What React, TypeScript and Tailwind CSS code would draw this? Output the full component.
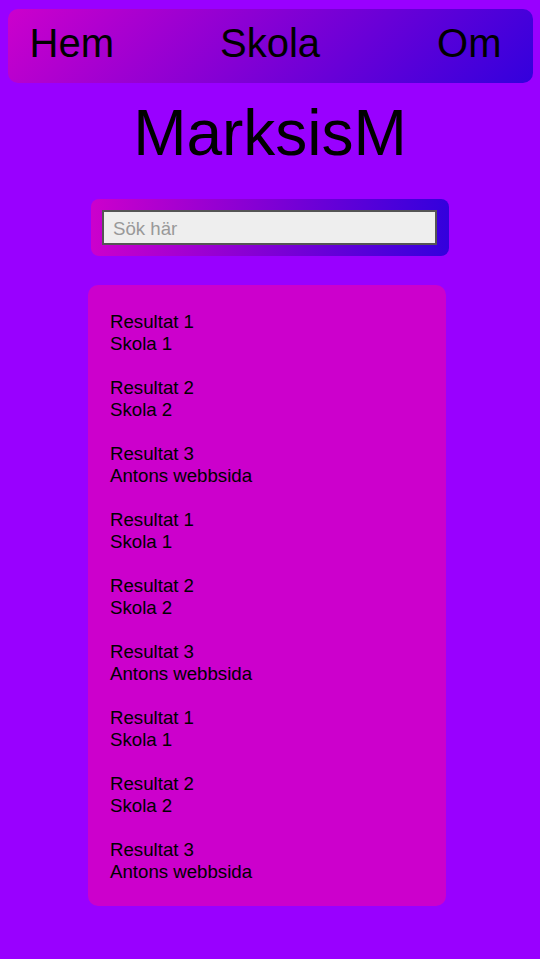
import React from "react";

const results = [
  ["Resultat 1", "Skola 1"],
  ["Resultat 2", "Skola 2"],
  ["Resultat 3", "Antons webbsida"],
  ["Resultat 1", "Skola 1"],
  ["Resultat 2", "Skola 2"],
  ["Resultat 3", "Antons webbsida"],
  ["Resultat 1", "Skola 1"],
  ["Resultat 2", "Skola 2"],
  ["Resultat 3", "Antons webbsida"],
];

const App = () => {
  return (
    <div className="min-h-[959px] w-full bg-[#9900ff] flex flex-col items-center text-black font-['Liberation_Sans',Arial,sans-serif]">
      <nav className="mt-[9px] w-[525px] h-[74px] rounded-[10px] bg-[linear-gradient(135deg,#cc00cc,#3300dd)] grid grid-cols-[1fr_auto_1fr] items-start pt-[11px] text-[40px] leading-[46px]">
        <a className="justify-self-start pl-[22px]">Hem</a>
        <a className="justify-self-center">Skola</a>
        <a className="justify-self-end pr-[31px]">Om</a>
      </nav>

      <h1 className="mt-[13px] text-[64px] leading-[74px]">MarksisM</h1>

      <div className="mt-[29px] w-[358px] rounded-[8px] bg-[linear-gradient(to_right,#cc00cc,#3300dd)] pl-[11px] pr-[12px] pt-[11px] pb-[11px]">
        <input
          type="text"
          placeholder="Sök här"
          className="w-full h-[35px] bg-[#eeeeee] border-2 border-[#555555] px-[9px] pt-[3px] text-[18.67px] placeholder:text-[#999999] outline-none"
        />
      </div>

      <div className="mt-[29px] mr-[6px] w-[358px] rounded-[10px] bg-[#cc00cc] pl-[22px] pt-[26px] pb-[23px] flex flex-col gap-[22px] text-[18.67px] leading-[22px]">
        {results.map(([title, site], i) => (
          <div key={i}>
            <div>{title}</div>
            <div>{site}</div>
          </div>
        ))}
      </div>
    </div>
  );
};

export default App;
